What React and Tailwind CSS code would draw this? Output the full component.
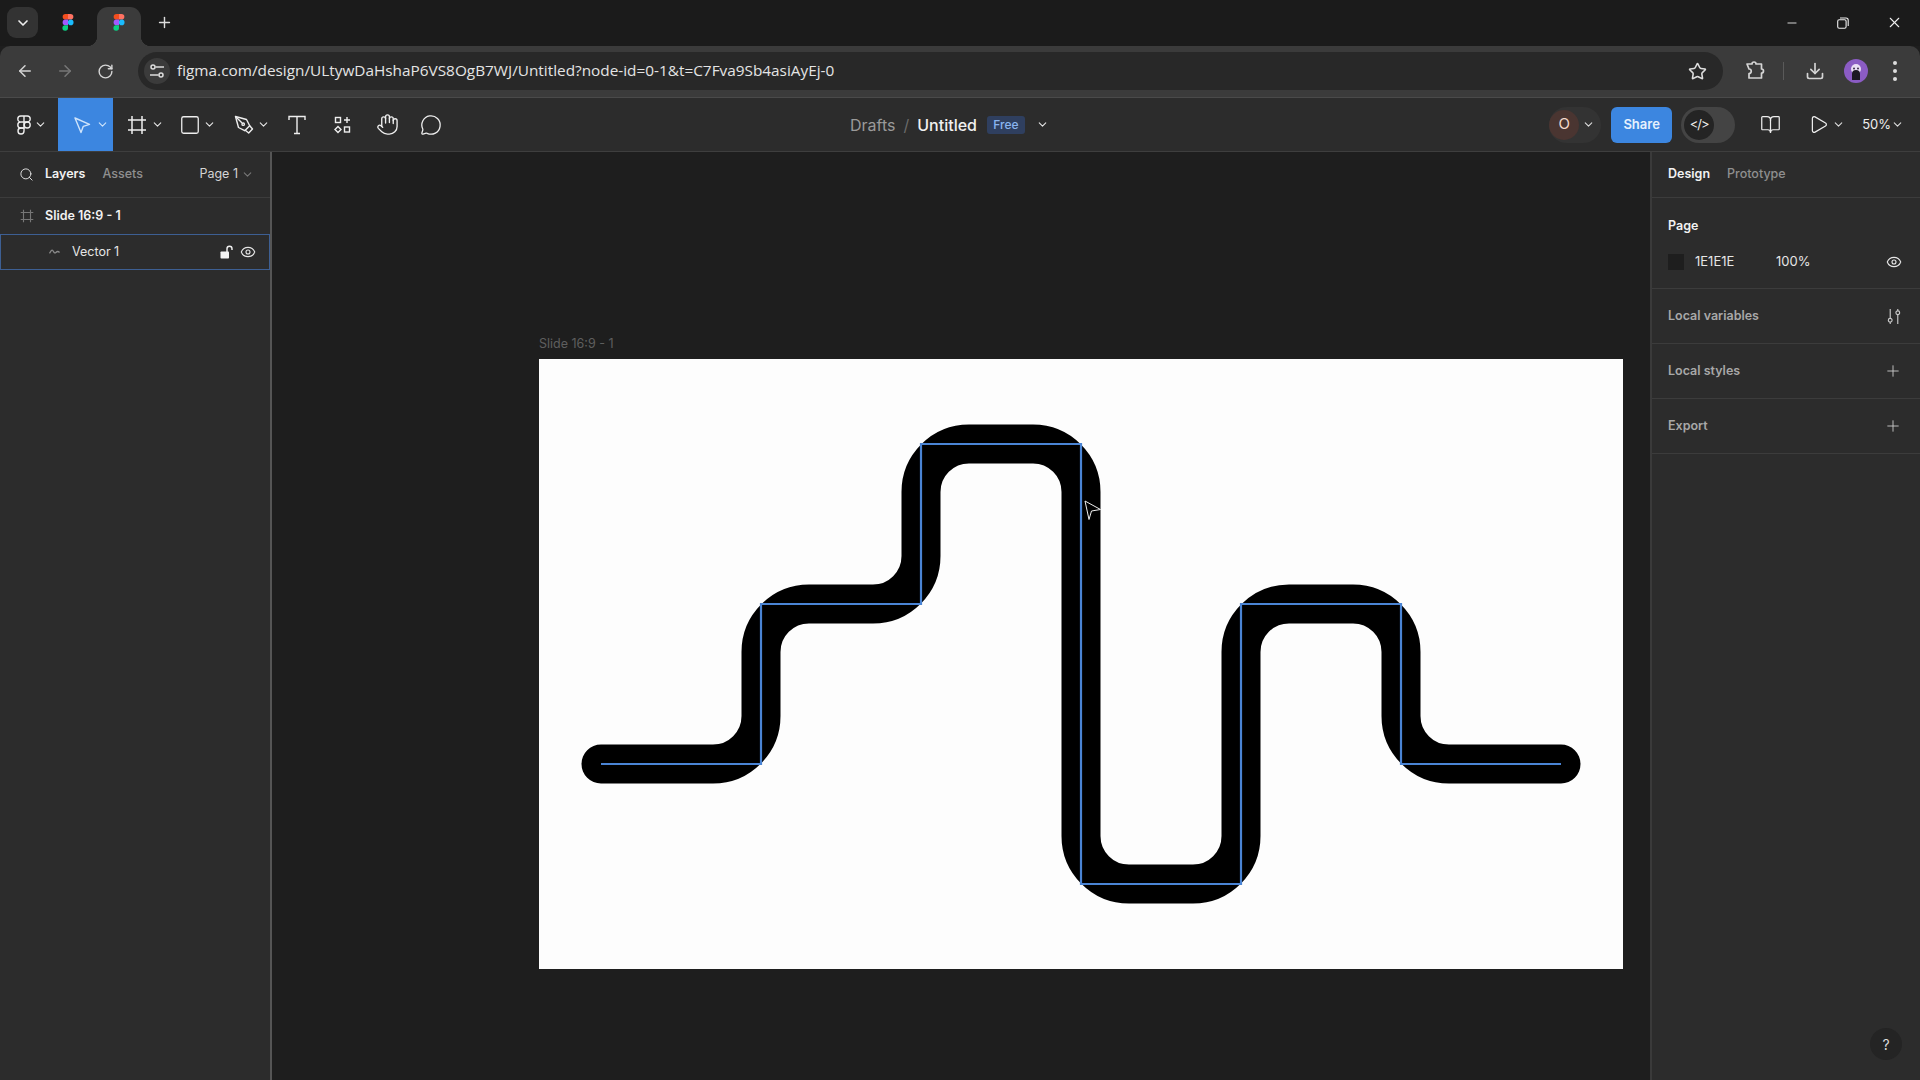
import React from 'react';
import {
  ArrowLeft, ArrowRight, RotateCw, Star, Download, Minus, X, Plus, ChevronDown,
  Search, Hand, MessageCircle, BookOpen, Play, Eye, Square,
} from 'lucide-react';

const FigmaLogo = ({ className }) => (
  <svg viewBox="0 0 14 20" className={className}>
    <path d="M4 0h3v6.6H4a3.3 3.3 0 0 1 0-6.6z" fill="#f24e1e" />
    <path d="M7 0h3a3.3 3.3 0 0 1 0 6.6H7z" fill="#ff7262" />
    <path d="M4 6.6h3v6.6H4a3.3 3.3 0 0 1 0-6.6z" fill="#a259ff" />
    <circle cx="10.2" cy="9.9" r="3.3" fill="#1abcfe" />
    <path d="M4 13.2h3v3.3a3.3 3.3 0 1 1-3-3.3z" fill="#0acf83" />
  </svg>
);

const Caret = ({ className = 'text-[#e6e6e6]' }) => (
  <ChevronDown size={13} strokeWidth={2} className={className} />
);

const FigmaMenuIcon = () => (
  <svg viewBox="0 0 14 20" className="w-[14px] h-[20px]" fill="none" stroke="#eee" strokeWidth="1.4">
    <path d="M7 1H3.8a3 3 0 0 0 0 6H7zM7 1h3.2a3 3 0 0 1 0 6H7zM7 7H3.8a3 3 0 0 0 0 6H7z" />
    <circle cx="10.2" cy="10" r="3" />
    <path d="M7 13H3.8a3 3 0 1 0 3.2 3z" />
  </svg>
);

const MoveIcon = () => (
  <svg viewBox="0 0 18 18" className="w-[18px] h-[18px]" fill="none" stroke="#cfe4fb" strokeWidth="1.4" strokeLinejoin="round">
    <path d="M2 2l14.5 6.4-6.2 1.9-2.3 6.3z" />
  </svg>
);

const FrameIcon = ({ size = 20, color = '#eee', sw = 1.5 }) => (
  <svg viewBox="0 0 20 20" width={size} height={size} fill="none" stroke={color} strokeWidth={sw}>
    <path d="M5 1v18M15 1v18M1 5h18M1 15h18" />
  </svg>
);

const PenIcon = () => (
  <svg viewBox="0 0 20 20" className="w-[20px] h-[20px]" fill="none" stroke="#eee" strokeWidth="1.4" strokeLinejoin="round">
    <path d="M1.5 1.5l11 3 3.2 6.2-5 5-6.2-3.2z" />
    <path d="M1.5 1.5l6.6 6.6" />
    <circle cx="9.2" cy="9.2" r="1.2" />
    <path d="M15.7 10.7l2.8 3.3-3.8 4-3.4-2.7" />
  </svg>
);

const TextIcon = () => (
  <svg viewBox="0 0 20 20" className="w-[20px] h-[20px]" fill="none" stroke="#eee" strokeWidth="1.4">
    <path d="M2 5V1.5h16V5M10 1.5v17M7 18.5h6" />
  </svg>
);

const ResourcesIcon = () => (
  <svg viewBox="0 0 18 18" className="w-[18px] h-[18px]" fill="none" stroke="#eee" strokeWidth="1.4">
    <rect x="1.5" y="1.5" width="5" height="5" />
    <path d="M13 1v6M10 4h6" />
    <path d="M4 10.5L7 13.5 4 16.5 1 13.5z" />
    <rect x="10.5" y="11" width="5" height="5" />
  </svg>
);

const TuneIcon = () => (
  <svg viewBox="0 0 16 16" className="w-[16px] h-[16px]" fill="none" stroke="#ddd" strokeWidth="1.5">
    <circle cx="4" cy="4" r="2" />
    <path d="M6.5 4H15" />
    <circle cx="12" cy="12" r="2" />
    <path d="M1 12h8.5" />
  </svg>
);

const PuzzleIcon = () => (
  <svg viewBox="0 0 20 20" className="w-[20px] h-[20px]" fill="none" stroke="#d5d5d5" strokeWidth="1.7" strokeLinejoin="round">
    <path d="M1.5 3.5h5a2 2 0 0 1 4 0h5.5v5a2 2 0 0 1 0 4v5H3.5v-4.5a2 2 0 0 0 0-4.5z" transform="translate(0.5 -0.5)" />
  </svg>
);

const RestoreIcon = () => (
  <svg viewBox="0 0 12 12" className="w-[12px] h-[12px]" fill="none" stroke="#eee" strokeWidth="1.1">
    <rect x="0.7" y="2.7" width="8.4" height="8.6" rx="1.5" />
    <path d="M3 1h6a2.2 2.2 0 0 1 2.2 2.2V9" />
  </svg>
);

const VectorIcon = () => (
  <svg viewBox="0 0 12 8" className="w-[11px] h-[8px]" fill="none" stroke="#8a8a8a" strokeWidth="1.4">
    <path d="M.5 5.5C2 3 3 1 4.2 2.5S6 6 7.5 4.5 10 3 11.5 4.5" />
  </svg>
);

const UnlockIcon = () => (
  <svg viewBox="0 0 13 14" className="w-[13px] h-[14px] ml-auto">
    <rect x="0.5" y="6.5" width="8.5" height="7" rx="0.8" fill="#f2f2f2" />
    <path d="M7 7V3.8a2.5 2.5 0 0 1 5 0V5" fill="none" stroke="#f2f2f2" strokeWidth="1.4" />
  </svg>
);

const VariablesIcon = () => (
  <svg viewBox="0 0 16 18" className="w-[16px] h-[17px]" fill="none" stroke="#ccc" strokeWidth="1.2">
    <path d="M4 1v10M4 15v2M12 1v2M12 7v10" />
    <circle cx="4" cy="13" r="2" />
    <circle cx="12" cy="5" r="2" />
  </svg>
);

const Avatar = () => (
  <svg viewBox="0 0 24 24" className="w-[24px] h-[24px]">
    <circle cx="12" cy="12" r="12" fill="#8b5cc4" />
    <circle cx="12" cy="10" r="5" fill="#e9ddf4" />
    <path d="M8 21v-6a4 4 0 0 1 8 0v6z" fill="#1c1822" />
    <circle cx="10" cy="9.5" r="1" fill="#3c2b4e" />
    <circle cx="14" cy="9.5" r="1" fill="#3c2b4e" />
  </svg>
);

const Section = ({ title, icon }) => (
  <div className="h-[55px] flex items-center justify-between pl-[16px] pr-[18px] border-b border-[#3c3c3c]">
    <span className="text-[12.5px] font-semibold text-[#a8a8a8]">{title}</span>
    {icon}
  </div>
);

const App = () => {
  return (
    <div className="w-[1920px] h-[1080px] overflow-hidden flex flex-col bg-[#1e1e1e] font-['Inter',sans-serif] text-[#eee]">
      {/* browser tab strip */}
      <div className="h-[46px] shrink-0 bg-[#1b1b1b] flex items-start pt-[7px] pl-[7px]">
        <div className="w-[31px] h-[31px] rounded-[9px] bg-[#333] flex items-center justify-center">
          <ChevronDown size={16} strokeWidth={2.5} />
        </div>
        <div className="w-[59px] h-[31px] flex items-center justify-center">
          <FigmaLogo className="w-[12px] h-[17px]" />
        </div>
        <div className="relative w-[44px] h-[39px] rounded-t-[11px] bg-[#3b3b3b] flex items-start pt-[7px] justify-center">
          <FigmaLogo className="w-[12px] h-[17px]" />
          <span className="absolute left-[-10px] bottom-0 w-[10px] h-[10px] bg-[radial-gradient(circle_at_0_0,transparent_10px,#3b3b3b_10.5px)]" />
          <span className="absolute right-[-10px] bottom-0 w-[10px] h-[10px] bg-[radial-gradient(circle_at_100%_0,transparent_10px,#3b3b3b_10.5px)]" />
        </div>
        <div className="w-[46px] h-[31px] flex items-center justify-center">
          <Plus size={17} strokeWidth={2} className="text-[#ddd]" />
        </div>
        <div className="ml-auto flex items-center h-[31px]">
          <div className="w-[52px] flex justify-center"><Minus size={14} strokeWidth={1.5} /></div>
          <div className="w-[50px] flex justify-center"><RestoreIcon /></div>
          <div className="w-[52px] flex justify-center"><X size={17} strokeWidth={1.5} /></div>
        </div>
      </div>

      {/* address bar */}
      <div className="h-[52px] shrink-0 bg-[#3b3b3b] rounded-t-[10px] border-b border-[#4a4a4a] flex items-start pt-[6px]">
        <div className="w-[138px] h-[38px] flex items-center text-[#d5d5d5]">
          <div className="w-[50px] flex justify-center"><ArrowLeft size={18} strokeWidth={2} /></div>
          <div className="w-[30px] flex justify-center"><ArrowRight size={18} strokeWidth={2} className="text-[#777]" /></div>
          <div className="w-[50px] flex justify-center"><RotateCw size={17} strokeWidth={2} /></div>
        </div>
        <div className="w-[1585px] h-[38px] rounded-full bg-[#282828] flex items-center pl-[6px] pr-[16px]">
          <div className="w-[26px] h-[26px] rounded-full bg-[#3b3b3b] flex items-center justify-center"><TuneIcon /></div>
          <span className="ml-[7px] text-[15.35px] text-[#e4e4e4] font-['Open_Sans',sans-serif]">
            figma.com/design/ULtywDaHshaP6VS8OgB7WJ/Untitled?node-id=0-1&amp;t=C7Fva9Sb4asiAyEj-0
          </span>
          <Star size={19} strokeWidth={2} className="ml-auto text-[#ddd]" />
        </div>
        <div className="flex-1 h-[38px] flex items-center text-[#d5d5d5]">
          <div className="ml-[22px]"><PuzzleIcon /></div>
          <div className="ml-[18px] w-px h-[18px] bg-[#5a5a5a]" />
          <Download size={20} strokeWidth={2} className="ml-[21px]" />
          <div className="ml-[19px]"><Avatar /></div>
          <div className="ml-[25px] flex flex-col gap-[4px]">
            <span className="w-[4px] h-[4px] rounded-full bg-[#ddd]" />
            <span className="w-[4px] h-[4px] rounded-full bg-[#ddd]" />
            <span className="w-[4px] h-[4px] rounded-full bg-[#ddd]" />
          </div>
        </div>
      </div>

      {/* figma toolbar */}
      <div className="h-[54px] shrink-0 bg-[#2c2c2c] border-b border-[#3e3e3e] flex items-center">
        <div className="w-[850px] h-full flex items-center shrink-0">
          <div className="w-[58px] h-full flex items-center pl-[17px] gap-[3px]"><FigmaMenuIcon /><Caret /></div>
          <div className="w-[55px] h-full bg-[#3c86e0] flex items-center pl-[15px] gap-[5px]">
            <MoveIcon />
            <Caret className="text-[#cfe4fb]" />
          </div>
          <div className="w-[56px] h-full flex items-center pl-[14px] gap-[4px]"><FrameIcon /><Caret /></div>
          <div className="w-[52px] h-full flex items-center pl-[10px] gap-[2px]"><Square size={22} strokeWidth={1.4} /><Caret /></div>
          <div className="w-[56px] h-full flex items-center pl-[13px] gap-[3px]"><PenIcon /><Caret /></div>
          <div className="w-[40px] h-full flex items-center justify-center"><TextIcon /></div>
          <div className="w-[52px] h-full flex items-center justify-center"><ResourcesIcon /></div>
          <div className="w-[36px] h-full flex items-center justify-center"><Hand size={23} strokeWidth={1.4} /></div>
          <div className="w-[52px] h-full flex items-center justify-center"><MessageCircle size={22} strokeWidth={1.4} /></div>
        </div>
        <div className="flex items-center text-[16px]">
          <span className="text-[#9a9a9a]">Drafts</span>
          <span className="mx-[8px] text-[#6a6a6a]">/</span>
          <span className="text-[#f0f0f0] font-medium">Untitled</span>
          <span className="ml-[10px] w-[38px] h-[18px] rounded-[3px] bg-[#2f3f5f] text-[#8ab4f0] text-[12px] font-medium flex items-center justify-center">Free</span>
          <Caret className="ml-[11px] text-[#e6e6e6]" />
        </div>
        <div className="ml-auto flex items-center h-full">
          <div className="w-[52px] h-[36px] rounded-full bg-[#333] flex items-center">
            <div className="w-[30px] h-[30px] rounded-full bg-[#4a3531] text-[#f3d9cc] text-[15px] flex items-center justify-center">O</div>
            <Caret className="ml-[3px] text-[#ddd]" />
          </div>
          <div className="ml-[10px] w-[61px] h-[36px] rounded-[6px] bg-[#3c86e0] text-[13px] font-semibold text-[#e6f1fd] flex items-center justify-center">Share</div>
          <div className="ml-[9px] w-[54px] h-[36px] rounded-full bg-[#444] flex items-center pl-[3px]">
            <div className="w-[30px] h-[30px] rounded-full bg-[#242424] flex items-center justify-center text-[13px] tracking-[-1px]">
              &lt;/&gt;
            </div>
          </div>
          <BookOpen size={21} strokeWidth={1.4} className="ml-[25px]" />
          <Play size={21} strokeWidth={1.4} className="ml-[27px]" />
          <Caret className="ml-[3px] text-[#ddd]" />
          <span className="ml-[17px] text-[13px]">50%</span>
          <Caret className="mr-[16px] text-[#ddd]" />
        </div>
      </div>

      <div className="flex-1 min-h-0 flex">
        {/* layers panel */}
        <div className="w-[272px] shrink-0 bg-[#2c2c2c] border-r-2 border-[#555] flex flex-col">
          <div className="h-[46px] border-b border-[#3c3c3c] flex items-center pl-[19px] pr-[16px] text-[12.5px]">
            <Search size={15} strokeWidth={1.6} className="text-[#ddd]" />
            <span className="ml-[11px] font-semibold text-[#f2f2f2]">Layers</span>
            <span className="ml-[17px] font-medium text-[#8f8f8f]">Assets</span>
            <span className="ml-auto text-[#d5d5d5]">Page 1</span>
            <Caret className="ml-[3px] text-[#777]" />
          </div>
          <div className="h-[36px] flex items-center pl-[20px] text-[12.5px] font-semibold text-[#f2f2f2]">
            <FrameIcon size={14} color="#777" sw={1.6} />
            <span className="ml-[11px]">Slide 16:9 - 1</span>
          </div>
          <div className="h-[36px] border border-[#3d5f93] flex items-center pl-[48px] pr-[13px] text-[12.5px] text-[#e6e6e6]">
            <VectorIcon />
            <span className="ml-[12px]">Vector 1</span>
            <UnlockIcon />
            <Eye size={16} strokeWidth={1.7} className="ml-[7px]" />
          </div>
        </div>

        {/* canvas */}
        <div className="flex-1 bg-[#1e1e1e] pl-[267px] pt-[183px]">
          <div className="h-[24px] text-[12.5px] leading-[17px] text-[#5e5e5e]">Slide 16:9 - 1</div>
          <div className="w-[1084px] h-[610px] bg-[#fdfdfd]">
            <svg viewBox="539 359 1084 610" className="block w-full h-full">
              <path
                d="M601 764H713A48 48 0 0 0 761 716V652A48 48 0 0 1 809 604H873A48 48 0 0 0 921 556V492A48 48 0 0 1 969 444H1033A48 48 0 0 1 1081 492V836A48 48 0 0 0 1129 884H1193A48 48 0 0 0 1241 836V652A48 48 0 0 1 1289 604H1353A48 48 0 0 1 1401 652V716A48 48 0 0 0 1449 764H1561"
                fill="none"
                stroke="#000"
                strokeWidth="39"
                strokeLinecap="round"
              />
              <path
                d="M601 764H761V604H921V444H1081V884H1241V604H1401V764H1561"
                fill="none"
                stroke="#4a84d4"
                strokeWidth="2.2"
              />
              <path
                d="M1085 501l15.5 8.5-9 1.5-2.5 8.5z"
                fill="#000"
                stroke="#eee"
                strokeWidth="1"
                strokeLinejoin="round"
              />
            </svg>
          </div>
        </div>

        {/* design panel */}
        <div className="relative w-[270px] shrink-0 bg-[#2c2c2c] border-l-2 border-[#3a3a3a] flex flex-col">
          <div className="h-[46px] border-b border-[#3c3c3c] flex items-center pl-[16px] text-[12.5px]">
            <span className="font-semibold text-[#f2f2f2]">Design</span>
            <span className="ml-[17px] font-medium text-[#8f8f8f]">Prototype</span>
          </div>
          <div className="h-[91px] border-b border-[#3c3c3c] pl-[16px] pr-[18px] pt-[20px]">
            <div className="text-[12.5px] leading-[16px] font-semibold text-[#f2f2f2]">Page</div>
            <div className="mt-[18px] flex items-center text-[13px] text-[#e6e6e6]">
              <span className="w-[16px] h-[16px] bg-[#1e1e1e]" />
              <span className="ml-[11px] w-[81px]">1E1E1E</span>
              <span>100%</span>
              <Eye size={16} strokeWidth={1.7} className="ml-auto" />
            </div>
          </div>
          <Section title="Local variables" icon={<VariablesIcon />} />
          <Section title="Local styles" icon={<Plus size={18} strokeWidth={1.2} className="text-[#ccc]" />} />
          <Section title="Export" icon={<Plus size={18} strokeWidth={1.2} className="text-[#ccc]" />} />
          <div className="absolute right-[18px] bottom-[20px] w-[32px] h-[32px] rounded-full bg-[#242424] text-[14px] text-[#ddd] flex items-center justify-center">?</div>
        </div>
      </div>
    </div>
  );
};

export default App;
